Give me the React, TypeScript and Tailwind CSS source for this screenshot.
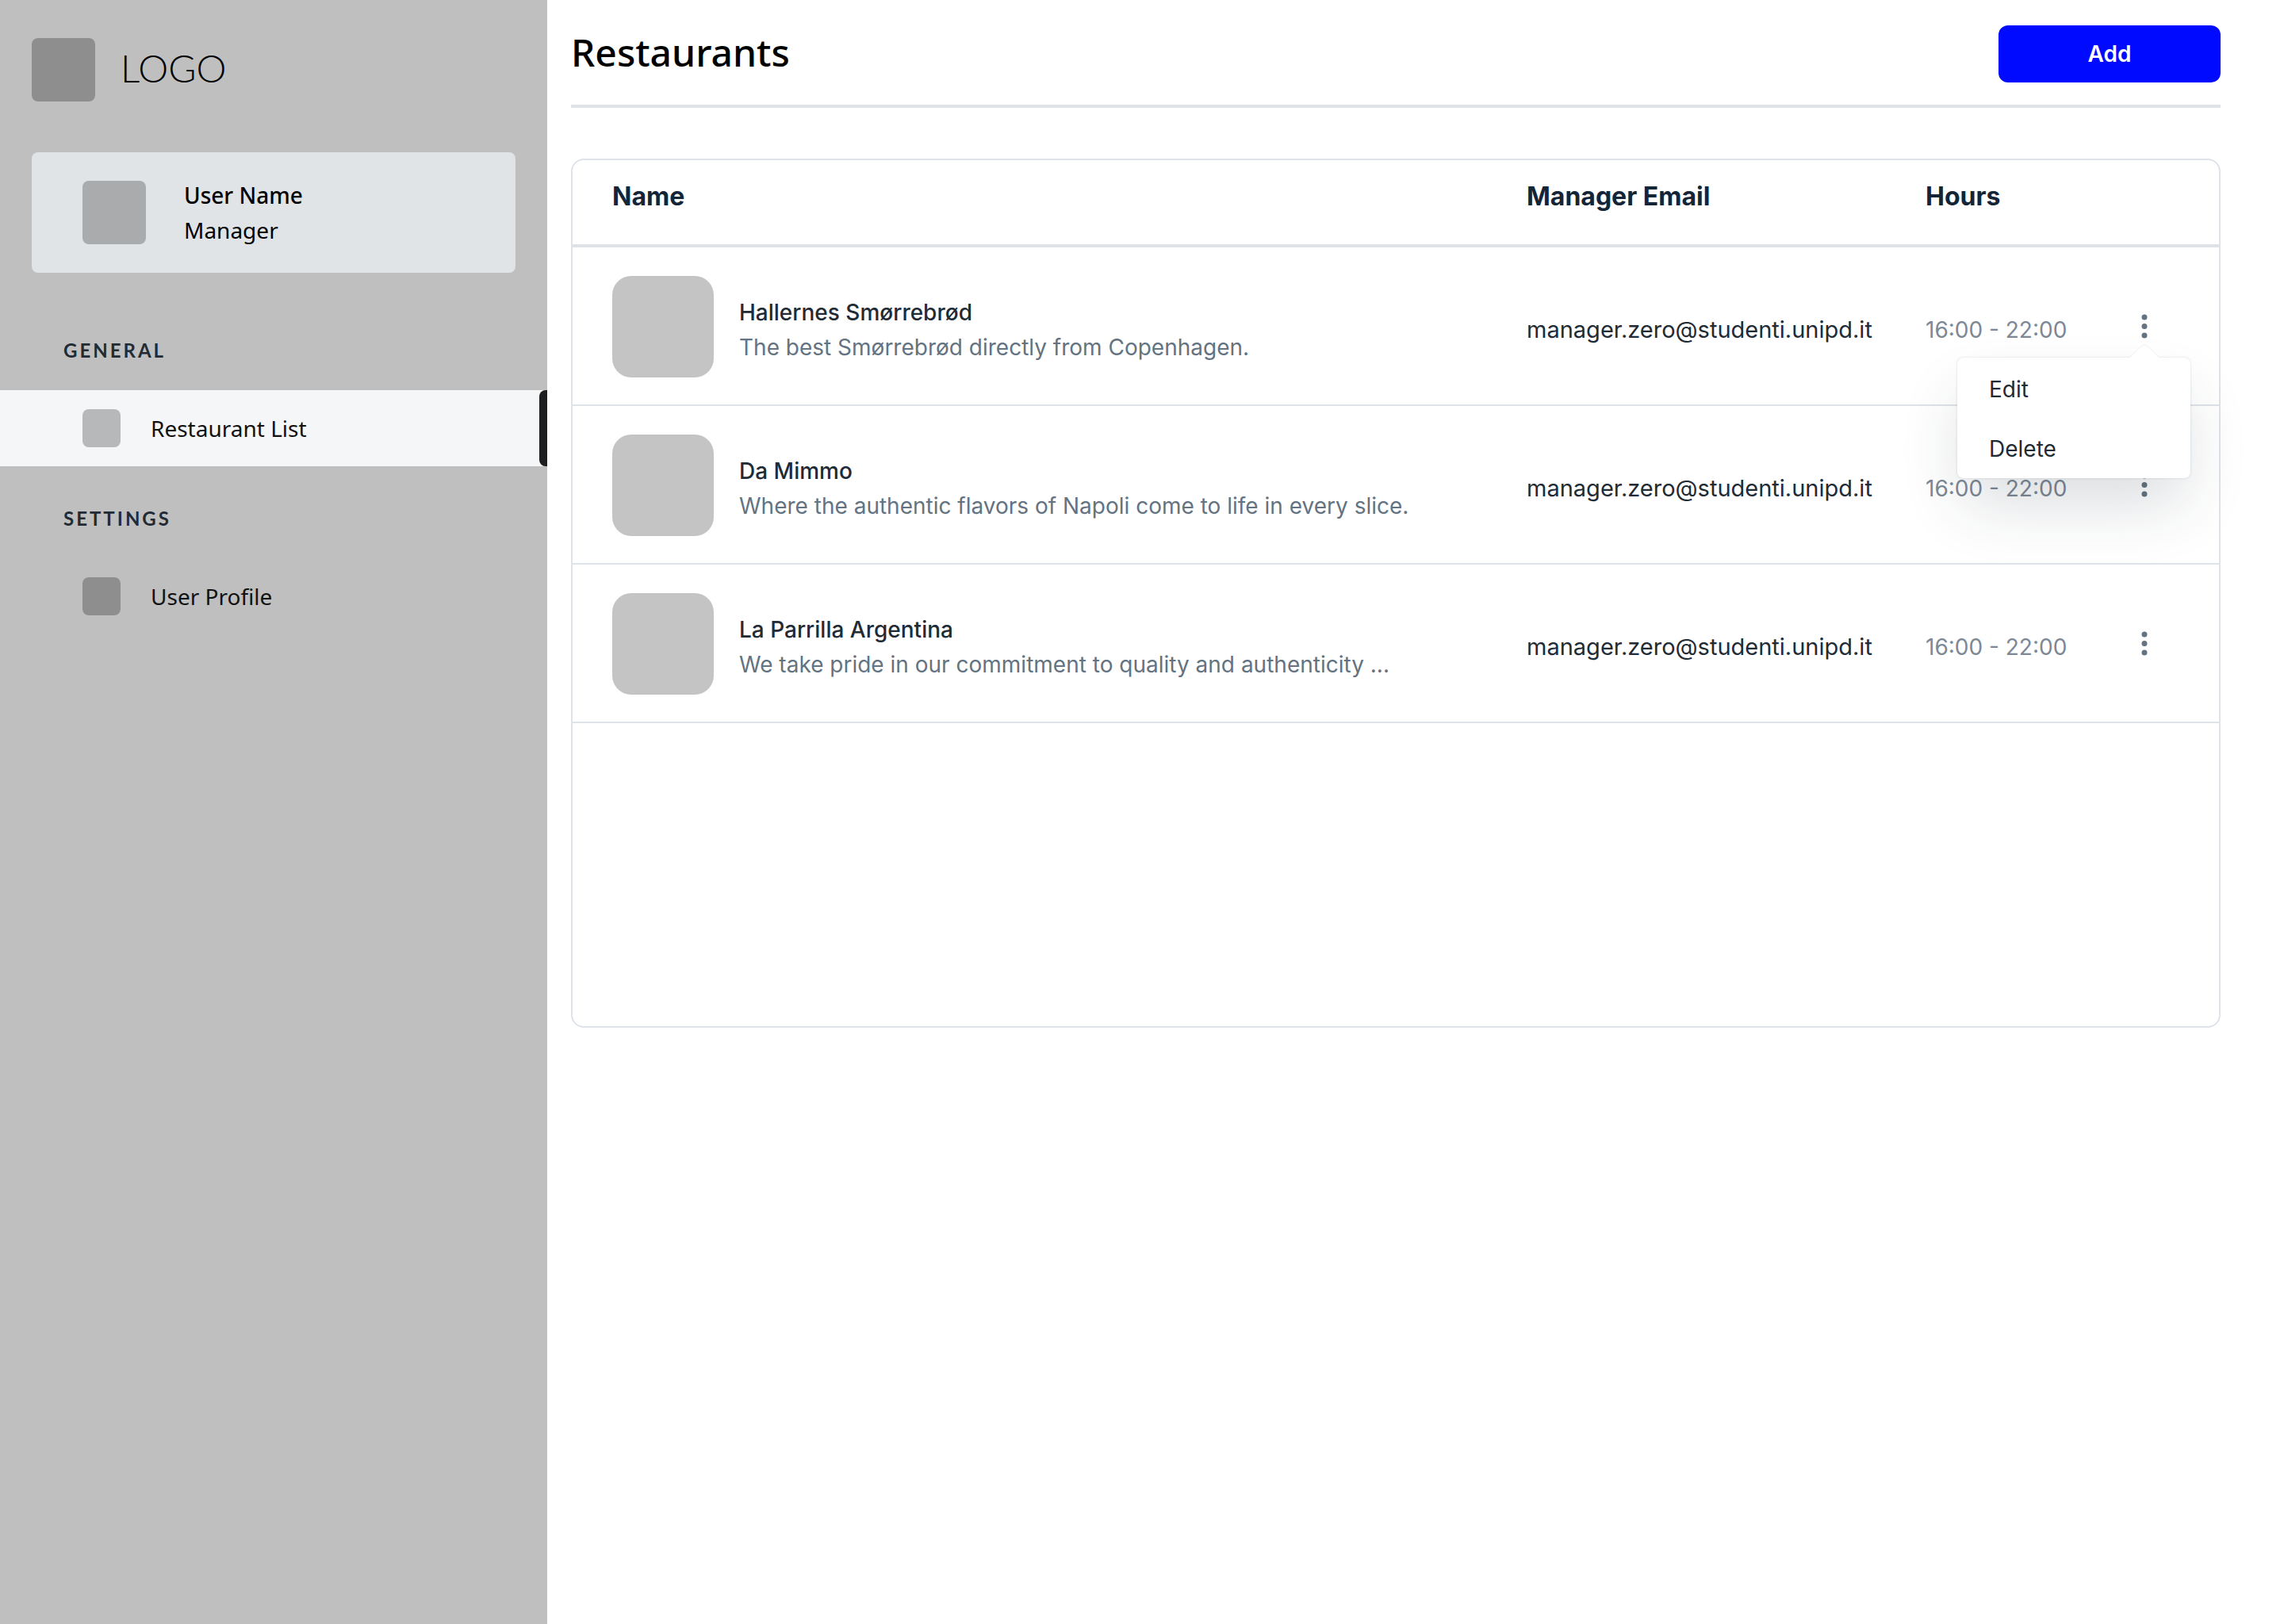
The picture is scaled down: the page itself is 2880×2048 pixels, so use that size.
const restaurants = [
  {
    name: "Hallernes Smørrebrød",
    description: "The best Smørrebrød directly from Copenhagen.",
    email: "manager.zero@studenti.unipd.it",
    hours: "16:00 - 22:00",
    menuOpen: true,
  },
  {
    name: "Da Mimmo",
    description: "Where the authentic flavors of Napoli come to life in every slice.",
    email: "manager.zero@studenti.unipd.it",
    hours: "16:00 - 22:00",
    menuOpen: false,
  },
  {
    name: "La Parrilla Argentina",
    description: "We take pride in our commitment to quality and authenticity ...",
    email: "manager.zero@studenti.unipd.it",
    hours: "16:00 - 22:00",
    menuOpen: false,
  },
];

function NavHeading({ children }: { children: string }) {
  return (
    <h2 className="px-20 font-[Lato,sans-serif] text-[24px] leading-9 font-bold tracking-[3px] text-[#212b36] uppercase">
      {children}
    </h2>
  );
}

function NavItem({ label, active = false }: { label: string; active?: boolean }) {
  return (
    <a
      href="#"
      aria-current={active ? "page" : undefined}
      className={
        active
          ? "flex h-24 items-center bg-[#f4f6f8] pl-[104px] text-[#111111]"
          : "flex h-24 items-center pl-[104px] text-[#111111]"
      }
    >
      <span className={active ? "size-12 rounded-lg bg-[#b6b8ba]" : "size-12 rounded-lg bg-[#8e8e8e]"} />
      <span className="ml-[38px] flex-1 text-[28px] leading-[44px]">{label}</span>
      {active && <span className="h-full w-[10px] rounded-l-lg bg-[#1e1e1e]" />}
    </a>
  );
}

function Sidebar() {
  return (
    <aside className="w-[690px] shrink-0 bg-[#bfbfbf] font-['Noto_Sans',sans-serif]">
      <div className="flex items-center gap-8 px-10 pt-12">
        <span className="size-20 rounded-lg bg-[#8e8e8e]" />
        <span className="pb-1 font-[Lato,sans-serif] text-[48px] leading-[60px] font-light text-black">LOGO</span>
      </div>
      <div className="mx-10 mt-16 flex h-[152px] items-center gap-12 rounded-lg bg-[#e0e4e7] px-16 text-[28px] leading-[44px] text-black">
        <span className="size-20 rounded-lg bg-[#a9abad]" />
        <div>
          <p className="font-medium">User Name</p>
          <p>Manager</p>
        </div>
      </div>
      <nav className="mt-20">
        <NavHeading>General</NavHeading>
        <div className="mt-8 mb-12">
          <NavItem label="Restaurant List" active />
        </div>
        <NavHeading>Settings</NavHeading>
        <div className="mt-8">
          <NavItem label="User Profile" />
        </div>
      </nav>
    </aside>
  );
}

function RowMenu() {
  return (
    <div
      role="menu"
      className="absolute top-full -right-[18px] z-10 h-[152px] w-[294px] rounded-lg bg-white pt-0.5 shadow-[0_0_3px_rgba(99,115,129,0.25),0_40px_80px_-8px_rgba(33,43,54,0.16)]"
    >
      <svg viewBox="0 0 36 18" className="absolute right-10 bottom-full h-[18px] w-9" aria-hidden="true">
        <path d="M0 18 L15 3 Q18 0 21 3 L36 18 Z" fill="#fff" stroke="none" />
        <path d="M0 17 L15 3 Q18 0 21 3 L36 17" fill="none" stroke="#eff1f3" strokeWidth="1" />
      </svg>
      <button role="menuitem" className="block h-[76px] w-full px-10 text-left text-[#212b36]">
        Edit
      </button>
      <button role="menuitem" className="block h-[74px] w-full px-10 text-left text-[#212b36]">
        Delete
      </button>
    </div>
  );
}

function RestaurantTable() {
  return (
    <div className="mt-16 min-h-[1096px] rounded-2xl border-2 border-[#dfe3e8]">
      <table className="w-full table-fixed border-separate border-spacing-0 text-left text-[28px] leading-[44px]">
        <colgroup>
          <col />
          <col className="w-[503px]" />
          <col className="w-[236px]" />
          <col className="w-[134px]" />
        </colgroup>
        <thead className="text-[32px] text-[#132536]">
          <tr>
            <th className="h-[110px] border-b-4 border-[#dfe3e8] pt-6 pl-[50px] align-top font-bold">Name</th>
            <th className="border-b-4 border-[#dfe3e8] pt-6 align-top font-bold">Manager Email</th>
            <th className="border-b-4 border-[#dfe3e8] pt-6 align-top font-bold">Hours</th>
            <th className="border-b-4 border-[#dfe3e8]" aria-label="Actions" />
          </tr>
        </thead>
        <tbody>
          {restaurants.map((r) => (
            <tr key={r.name}>
              <td className="h-[200px] border-b-2 border-[#dfe3e8] pt-0.5 pl-[50px]">
                <div className="flex items-center gap-8">
                  <span className="size-32 shrink-0 rounded-3xl bg-[#c4c4c4]" />
                  <div className="pt-2">
                    <p className="font-medium text-[#212b36]">{r.name}</p>
                    <p className="text-[#637381]">{r.description}</p>
                  </div>
                </div>
              </td>
              <td className="border-b-2 border-[#dfe3e8] pt-2.5 text-[29px] text-[#212b36]">{r.email}</td>
              <td className="border-b-2 border-[#dfe3e8] pt-2.5 text-[#7d8894]">{r.hours}</td>
              <td className="border-b-2 border-[#dfe3e8]">
                <div className="relative size-20">
                  <button
                    aria-label={`Actions for ${r.name}`}
                    aria-expanded={r.menuOpen}
                    className="flex size-20 items-center justify-center"
                  >
                    <svg viewBox="0 0 32 32" className="size-8" fill="#637381" aria-hidden="true">
                      <circle cx="16" cy="5" r="3.5" />
                      <circle cx="16" cy="16.5" r="3.5" />
                      <circle cx="16" cy="28" r="3.5" />
                    </svg>
                  </button>
                  {r.menuOpen && <RowMenu />}
                </div>
              </td>
            </tr>
          ))}
        </tbody>
      </table>
    </div>
  );
}

export default function App() {
  return (
    <div className="flex min-h-screen bg-white font-[Inter,sans-serif]">
      <Sidebar />
      <main className="min-w-0 flex-1 pt-8 pr-20 pl-[30px]">
        <header className="flex items-center justify-between border-b-4 border-[#dfe3e8] pb-7">
          <h1 className="pb-1 font-['Noto_Sans',sans-serif] text-[48px] leading-[60px] font-medium text-black">
            Restaurants
          </h1>
          <button className="h-[72px] w-[280px] rounded-xl bg-[#000aff] text-[28px] leading-[44px] font-semibold text-white">
            Add
          </button>
        </header>
        <RestaurantTable />
      </main>
    </div>
  );
}
